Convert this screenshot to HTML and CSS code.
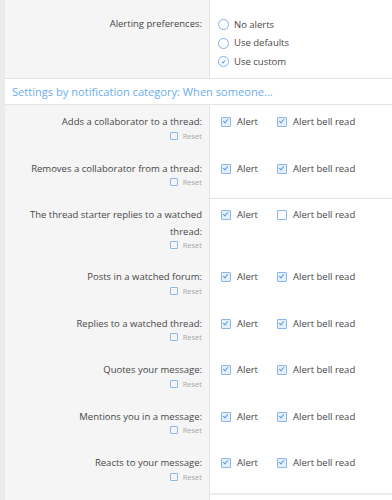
FILE: index.html
```html
<!DOCTYPE html>
<html lang="en">
	<head>
		<meta charset="UTF-8" />
		<meta name="viewport" content="width=device-width, initial-scale=1.0" />
		<title>Alert preferences</title>
		<link rel="stylesheet" href="styles.css">
	</head>
	<body>
		<div class="form">
			<div class="form-row form-row-top">
				<div class="row-label">Alerting preferences:</div>
				<div class="row-input">
					<ul class="choices">
						<li class="choice"><span class="radio"></span>No alerts</li>
						<li class="choice"><span class="radio"></span>Use defaults</li>
						<li class="choice"><span class="radio checked"><svg viewBox="0 0 10 10"><path d="M3 5.2 L4.5 6.6 L7.2 3.6" /></svg></span>Use custom</li>
					</ul>
				</div>
			</div>

			<h3 class="section-header">Settings by notification category: When someone...</h3>

			<div class="form-row">
				<div class="row-label">
					<div class="label-text">Adds a collaborator to a thread:</div>
					<div class="reset"><span class="reset-box"></span>Reset</div>
				</div>
				<div class="row-input">
					<label class="check"><span class="box on"></span>Alert</label>
					<label class="check"><span class="box on"></span>Alert bell read</label>
				</div>
			</div>

			<div class="form-row">
				<div class="row-label">
					<div class="label-text">Removes a collaborator from a thread:</div>
					<div class="reset"><span class="reset-box"></span>Reset</div>
				</div>
				<div class="row-input">
					<label class="check"><span class="box on"></span>Alert</label>
					<label class="check"><span class="box on"></span>Alert bell read</label>
				</div>
			</div>

			<div class="form-row row-sep">
				<div class="row-label">
					<div class="label-text">The thread starter replies to a watched thread:</div>
					<div class="reset"><span class="reset-box"></span>Reset</div>
				</div>
				<div class="row-input">
					<label class="check"><span class="box on"></span>Alert</label>
					<label class="check"><span class="box"></span>Alert bell read</label>
				</div>
			</div>

			<div class="form-row">
				<div class="row-label">
					<div class="label-text">Posts in a watched forum:</div>
					<div class="reset"><span class="reset-box"></span>Reset</div>
				</div>
				<div class="row-input">
					<label class="check"><span class="box on"></span>Alert</label>
					<label class="check"><span class="box on"></span>Alert bell read</label>
				</div>
			</div>

			<div class="form-row">
				<div class="row-label">
					<div class="label-text">Replies to a watched thread:</div>
					<div class="reset"><span class="reset-box"></span>Reset</div>
				</div>
				<div class="row-input">
					<label class="check"><span class="box on"></span>Alert</label>
					<label class="check"><span class="box on"></span>Alert bell read</label>
				</div>
			</div>

			<div class="form-row">
				<div class="row-label">
					<div class="label-text">Quotes your message:</div>
					<div class="reset"><span class="reset-box"></span>Reset</div>
				</div>
				<div class="row-input">
					<label class="check"><span class="box on"></span>Alert</label>
					<label class="check"><span class="box on"></span>Alert bell read</label>
				</div>
			</div>

			<div class="form-row">
				<div class="row-label">
					<div class="label-text">Mentions you in a message:</div>
					<div class="reset"><span class="reset-box"></span>Reset</div>
				</div>
				<div class="row-input">
					<label class="check"><span class="box on"></span>Alert</label>
					<label class="check"><span class="box on"></span>Alert bell read</label>
				</div>
			</div>

			<div class="form-row">
				<div class="row-label">
					<div class="label-text">Reacts to your message:</div>
					<div class="reset"><span class="reset-box"></span>Reset</div>
				</div>
				<div class="row-input">
					<label class="check"><span class="box on"></span>Alert</label>
					<label class="check"><span class="box on"></span>Alert bell read</label>
				</div>
			</div>

			<div class="form-row row-sep row-end">
				<div class="row-label"></div>
				<div class="row-input"></div>
			</div>
		</div>
	</body>
</html>
```

FILE: styles.css
```css
body {
	margin: 0;
	font-family: "Open Sans", "Segoe UI", sans-serif;
	font-size: 9.5px;
	color: #474747;
	background: #fff;
}
.form {
	border-left: 5px solid #ebebeb;
	min-height: 500px;
}
.form-row {
	display: flex;
	height: 46.5px;
}
.row-label {
	width: 205px;
	flex: none;
	box-sizing: border-box;
	background: #f5f5f5;
	border-right: 1px solid #e4e4e4;
	text-align: right;
	padding: 9px 7px 0 20px;
	line-height: 16.5px;
}
.row-input {
	flex: 1;
	display: flex;
	align-items: flex-start;
	padding: 9px 0 0 11px;
	line-height: 16.5px;
}
.form-row-top {
	height: 78px;
	border-bottom: 1px solid #e4e4e4;
}
.form-row-top .row-label {
	padding-top: 16px;
}
.form-row-top .row-input {
	padding: 15.5px 0 0 8px;
}
.choices {
	list-style: none;
	margin: 0;
	padding: 0;
}
.choice {
	display: flex;
	align-items: center;
	height: 18.5px;
}
.radio {
	width: 9px;
	height: 9px;
	border: 1px solid #7fb0eb;
	border-radius: 50%;
	margin-right: 5px;
	display: flex;
	box-sizing: content-box;
}
.radio svg {
	width: 9px;
	height: 9px;
	fill: none;
	stroke: #6aa3e6;
	stroke-width: 1.2;
}
.section-header {
	margin: 0;
	height: 25px;
	line-height: 25px;
	padding-left: 7px;
	font-size: 11.1px;
	font-weight: normal;
	color: #6cadee;
	border-bottom: 1px solid #e4e4e4;
}
.reset {
	line-height: 10px;
	font-size: 7.5px;
	color: #a8a8a8;
	display: flex;
	justify-content: flex-end;
	align-items: center;
}
.reset-box {
	width: 6px;
	height: 6px;
	border: 1px solid #8db8ea;
	border-radius: 1px;
	margin-right: 5px;
}
.check {
	display: flex;
	align-items: center;
	margin-right: 19px;
}
.box {
	width: 8px;
	height: 8px;
	border: 1px solid #8ab6ea;
	border-radius: 1px;
	margin-right: 6px;
	position: relative;
}
.box.on {
	background: #e6f0fb;
}
.box.on::after {
	content: "";
	position: absolute;
	left: 2px;
	top: 0px;
	width: 2px;
	height: 4px;
	border: solid #5b9be2;
	border-width: 0 1px 1px 0;
	transform: rotate(40deg);
}
.row-sep {
	height: 62px;
}
.row-sep .row-input {
	border-top: 1px solid #e4e4e4;
	padding-top: 8px;
}
.row-end {
	height: 20px;
}
.row-end .row-input {
	border-top: 2px solid #ececec;
}
```
